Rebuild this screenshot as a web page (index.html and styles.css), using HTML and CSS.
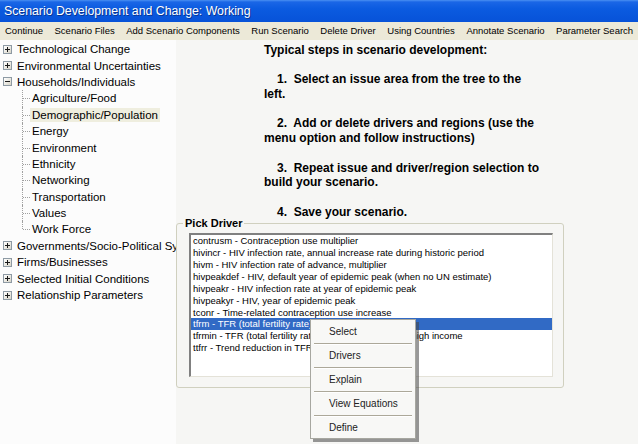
FILE: index.html
```html
<!DOCTYPE html>
<html>
<head>
<meta charset="utf-8">
<link rel="stylesheet" href="styles.css">
</head>
<body>
<div class="window">
  <div class="titlebar">Scenario Development and Change: Working</div>
  <div class="menubar">
    <span>Continue</span>
    <span>Scenario Files</span>
    <span>Add Scenario Components</span>
    <span>Run Scenario</span>
    <span>Delete Driver</span>
    <span>Using Countries</span>
    <span>Annotate Scenario</span>
    <span>Parameter Search</span>
  </div>
  <div class="body">
    <div class="tree">
      <div class="row top"><i class="exp plus"></i><span>Technological Change</span></div>
      <div class="row top"><i class="exp plus"></i><span>Environmental Uncertainties</span></div>
      <div class="row top"><i class="exp"></i><span>Households/Individuals</span></div>
      <div class="children">
        <div class="row child"><span>Agriculture/Food</span></div>
        <div class="row child"><span class="sel">Demographic/Population</span></div>
        <div class="row child"><span>Energy</span></div>
        <div class="row child"><span>Environment</span></div>
        <div class="row child"><span>Ethnicity</span></div>
        <div class="row child"><span>Networking</span></div>
        <div class="row child"><span>Transportation</span></div>
        <div class="row child"><span>Values</span></div>
        <div class="row child last"><span>Work Force</span></div>
      </div>
      <div class="row top"><i class="exp plus"></i><span>Governments/Socio-Political Systems</span></div>
      <div class="row top"><i class="exp plus"></i><span>Firms/Businesses</span></div>
      <div class="row top"><i class="exp plus"></i><span>Selected Initial Conditions</span></div>
      <div class="row top"><i class="exp plus"></i><span>Relationship Parameters</span></div>
    </div>
    <div class="main">
      <div class="steps">
        <div class="line">Typical steps in scenario development:</div>
        <div class="line"></div>
        <div class="line ind">1.&nbsp; Select an issue area from the tree to the</div>
        <div class="line">left.</div>
        <div class="line"></div>
        <div class="line ind">2.&nbsp; Add or delete drivers and regions (use the</div>
        <div class="line">menu option and follow instructions)</div>
        <div class="line"></div>
        <div class="line ind">3.&nbsp; Repeat issue and driver/region selection to</div>
        <div class="line">build your scenario.</div>
        <div class="line"></div>
        <div class="line ind">4.&nbsp; Save your scenario.</div>
      </div>
      <div class="group">
        <div class="group-title">Pick Driver</div>
        <div class="list">
          <div class="item">contrusm - Contraception use multiplier</div>
          <div class="item">hivincr - HIV infection rate, annual increase rate during historic period</div>
          <div class="item">hivm - HIV infection rate of advance, multiplier</div>
          <div class="item">hivpeakdef - HIV, default year of epidemic peak (when no UN estimate)</div>
          <div class="item">hivpeakr - HIV infection rate at year of epidemic peak</div>
          <div class="item">hivpeakyr - HIV, year of epidemic peak</div>
          <div class="item">tconr - Time-related contraception use increase</div>
          <div class="item selected">tfrm - TFR (total fertility rate) multiplier</div>
          <div class="item">tfrmin - TFR (total fertility rate) minimum, targets for high income</div>
          <div class="item">ttfrr - Trend reduction in TFR for regions</div>
        </div>
      </div>
    </div>
  </div>
  <div class="ctxmenu">
    <div class="mi">Select</div>
    <div class="sep"></div>
    <div class="mi">Drivers</div>
    <div class="sep"></div>
    <div class="mi">Explain</div>
    <div class="sep"></div>
    <div class="mi">View Equations</div>
    <div class="sep"></div>
    <div class="mi">Define</div>
  </div>
</div>
</body>
</html>
```
FILE: styles.css
```css
* { box-sizing: border-box; }
html, body { margin: 0; padding: 0; }
body {
  width: 638px;
  height: 444px;
  overflow: hidden;
  font-family: "Liberation Sans", Arial, sans-serif;
  background: #f6f6f4;
  color: #000;
}
.window {
  position: relative;
  width: 638px;
  height: 444px;
  display: flex;
  flex-direction: column;
}
.titlebar {
  height: 22px;
  flex: none;
  background: linear-gradient(to bottom, #4a90f2 0, #1a66e6 2px, #0b5be0 40%, #0752d8 100%);
  color: #fff;
  font-size: 12.3px;
  line-height: 22px;
  padding-left: 4px;
  text-shadow: 1px 1px 0 #0a3590;
  white-space: nowrap;
}
.menubar {
  height: 18px;
  flex: none;
  background: #ece9d8;
  display: flex;
  gap: 11.5px;
  padding-left: 5px;
  font-size: 9.5px;
  line-height: 18px;
  white-space: nowrap;
  overflow: hidden;
}
.body {
  flex: 1;
  display: flex;
  min-height: 0;
}
.tree {
  width: 176px;
  flex: none;
  background: #fcfcfc;
  padding-top: 1px;
  overflow: hidden;
  white-space: nowrap;
}
.row {
  height: 16.4px;
  display: flex;
  align-items: center;
  font-size: 11.5px;
  position: relative;
}
.row.top { padding-left: 3px; }
.row.top span { margin-left: 5px; }
.exp {
  width: 9px;
  height: 9px;
  flex: none;
  border: 1px solid #8e9aa4;
  background: linear-gradient(135deg, #ffffff, #d8d5c8);
  position: relative;
}
.exp::before {
  content: "";
  position: absolute;
  left: 1px;
  top: 3px;
  width: 5px;
  height: 1px;
  background: #1a1a1a;
}
.exp.plus::after {
  content: "";
  position: absolute;
  left: 3px;
  top: 1px;
  width: 1px;
  height: 5px;
  background: #1a1a1a;
}
.row.child { padding-left: 32px; }
.row.child::before {
  content: "";
  position: absolute;
  left: 22px;
  top: 0;
  height: 100%;
  border-left: 1px dotted #a0a0a0;
}
.row.child.last::before { height: 50%; }
.row.child::after {
  content: "";
  position: absolute;
  left: 23px;
  top: 50%;
  width: 7px;
  border-top: 1px dotted #a0a0a0;
}
.sel {
  background: #efeedf;
  padding: 1px 2px;
  margin-left: -2px;
}
.main {
  flex: 1;
  min-width: 0;
}
.steps {
  padding: 3px 0 0 88px;
  font-size: 12px;
  font-weight: bold;
  line-height: 14.7px;
  white-space: nowrap;
}
.line { height: 14.7px; }
.ind { padding-left: 13px; }
.group {
  margin-top: 4px;
  width: 388px;
  height: 165px;
  border: 1px solid #d0d0bf;
  border-radius: 3px;
  padding-left: 12px;
  font-size: 11px;
}
.group-title {
  display: block;
  width: max-content;
  margin: -7px 0 0 -6px;
  padding: 0 2px;
  background: #f6f6f4;
  font-weight: bold;
  font-size: 11px;
  line-height: 13px;
  height: 13px;
}
.list {
  margin-top: 3px;
  width: 364px;
  height: 144px;
  background: #fff;
  border-top: 2px solid #808080;
  border-left: 2px solid #808080;
  border-right: 1px solid #e4e2d8;
  border-bottom: 1px solid #e4e2d8;
  overflow: hidden;
  white-space: nowrap;
  font-size: 9.5px;
}
.item {
  height: 11.9px;
  line-height: 11.9px;
  padding-left: 2px;
}
.item.selected {
  background: #316ac5;
  color: #fff;
}
.ctxmenu {
  position: absolute;
  left: 310px;
  top: 319px;
  width: 106px;
  background: #f8f8f6;
  border: 1px solid #a7a7a0;
  padding: 1px 3px 0 3px;
  box-shadow: 3px 3px 0 rgba(70, 70, 70, 0.55);
  font-size: 10px;
  color: #222;
}
.mi {
  height: 21px;
  line-height: 21px;
  padding-left: 15px;
}
.sep {
  border-top: 1px solid #aca899;
  border-bottom: 1px solid #ffffff;
  margin-top: 1px;
  height: 2px;
}
```
